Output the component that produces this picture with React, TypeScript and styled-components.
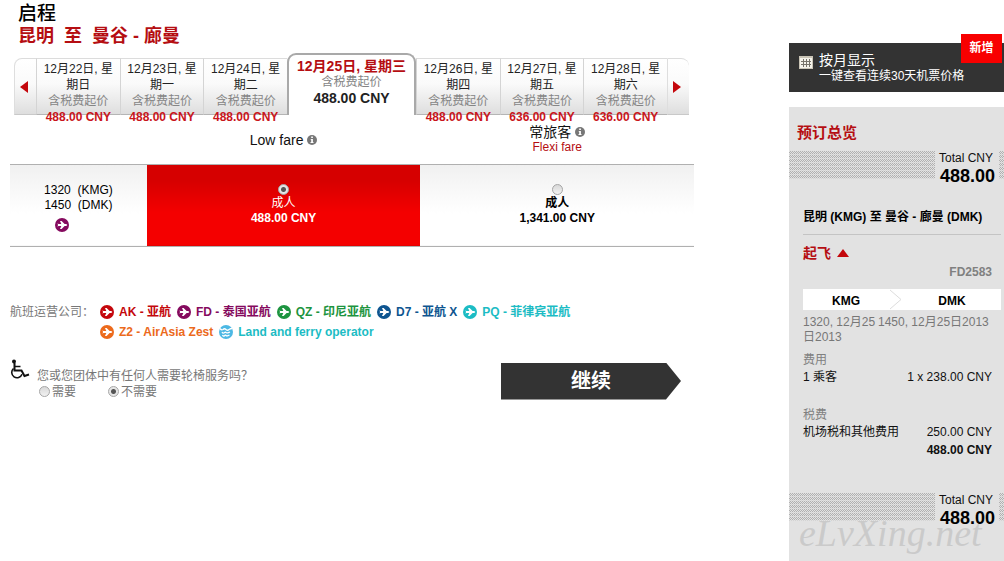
import React from "react";
import styled, { createGlobalStyle, css } from "styled-components";

const RED = "#b50e12";

const GlobalStyle = createGlobalStyle`
  *, *::before, *::after { box-sizing: border-box; }
  body {
    margin: 0;
    background: #fff;
    color: #1a1a1a;
    font: 12px/16px "Liberation Sans", "Noto Sans CJK SC", sans-serif;
  }
  h1, h2, h3, h4, p, ul, dl, dd, dt, fieldset { margin: 0; padding: 0; border: 0; list-style: none; }
  button { font: inherit; color: inherit; border: 0; padding: 0; background: none; cursor: pointer; }
`;

const Page = styled.div`
  display: flex;
  align-items: flex-start;
  min-height: 100vh;
`;

const Main = styled.main`
  flex: 1;
  min-width: 0;
  margin: 3px 95px 0 10px;
`;

const Heading = styled.h1`
  padding-left: 8px;
  font-size: 19px;
  line-height: 22px;
  font-weight: 500;
  color: #000;
`;

const Route = styled.h2`
  padding-left: 8px;
  font-size: 18px;
  line-height: 22px;
  font-weight: 700;
  color: ${RED};
  white-space: pre;
`;

/* date strip */

const Strip = styled.nav`
  display: flex;
  align-items: flex-end;
  height: 62px;
  margin: 6px 5px 0 4px;
`;

const tabFace = css`
  height: 57px;
  border-top: 1px solid #dcdcdc;
  background: linear-gradient(#fff 0%, #fafafa 45%, #dedede 100%);
`;

const Arrow = styled.button<{ $side: "left" | "right" }>`
  ${tabFace}
  flex: 0 0 22px;
  display: flex;
  align-items: center;
  justify-content: center;
  padding-right: 4px;
  border-left: 1px solid #dedede;
  border-bottom: 1px solid #c9c9c9;
  border-radius: ${(p) => (p.$side === "left" ? "8px 0 0 0" : "0 8px 0 0")};
`;

const Tab = styled.button`
  ${tabFace}
  flex: 1 1 83px;
  padding: 2px 4px 0;
  border-left: 1px solid #d4d4d4;
  border-bottom: 1px solid #b5b5b5;
  display: flex;
  flex-direction: column;
  align-items: center;
`;

const ActiveTab = styled.button`
  flex: 0 0 129px;
  height: 62px;
  padding-top: 3px;
  border: 2px solid #a9a9a9;
  border-bottom: 0;
  border-radius: 9px 9px 0 0;
  background: #fff;
  display: flex;
  flex-direction: column;
  align-items: center;
`;

const TabDate = styled.span<{ $active?: boolean }>`
  color: ${(p) => (p.$active ? RED : "#222")};
  font-size: ${(p) => (p.$active ? "14px" : "12px")};
  font-weight: ${(p) => (p.$active ? 700 : 400)};
`;

const TabNote = styled.span`
  color: #858585;
`;

const TabPrice = styled.span<{ $active?: boolean }>`
  color: ${(p) => (p.$active ? "#222" : "#c9151b")};
  font-size: ${(p) => (p.$active ? "14px" : "12px")};
  font-weight: 700;
  white-space: nowrap;
`;

/* fares */

const FareTable = styled.table`
  width: 100%;
  table-layout: fixed;
  border-collapse: collapse;
  text-align: center;

  col:first-child { width: 20%; }
  th { padding: 1px 0 0; height: 49px; font-weight: 400; vertical-align: middle; }
  td {
    height: 82px;
    padding: 0;
    border-top: 1px solid #b0b0b0;
    border-bottom: 1px solid #b0b0b0;
    line-height: 15px;
  }
`;

const FareName = styled.div`
  display: flex;
  justify-content: center;
  align-items: center;
  gap: 4px;
  color: #111;
  font-size: 14px;
`;

const FareSub = styled.div`
  line-height: 15px;
  color: ${RED};
`;

const PlainCell = styled.td`
  background: linear-gradient(#f0f0f0, #fff 60%);
  color: #000;
`;

const PickedCell = styled.td`
  background: linear-gradient(#d60000 20%, #f40000 60%);
  color: #fff;
`;

const Times = styled.div`
  padding-top: 4px;
  white-space: pre;
`;

const TimesIcon = styled.div`
  display: flex;
  justify-content: center;
  padding: 5px 32px 0 0;
`;

const FareChoice = styled.label`
  display: flex;
  flex-direction: column;
  align-items: center;
`;

const Radio = styled.input.attrs({ type: "radio" })`
  appearance: none;
  flex: none;
  width: 11px;
  height: 11px;
  margin: 0;
  border: 1px solid #a6a6a6;
  border-radius: 50%;
  background: linear-gradient(#d8d8d8, #f2f2f2);
  &:checked {
    background: radial-gradient(circle, #555 0 2px, #e6e6e6 3px);
  }
`;

const FareRadio = styled(Radio)`
  margin: 0 0 1px;
`;

const Price = styled.strong`
  font-weight: 700;
`;

/* operators */

const Legend = styled.section`
  display: flex;
  margin-top: 55px;
  line-height: 20px;
  color: #777;
`;

const LegendLabel = styled.h3`
  flex: 0 0 90px;
  font-size: 12px;
  font-weight: 400;
`;

const Operators = styled.ul`
  display: flex;
  flex-wrap: wrap;
  column-gap: 6px;
  max-width: 500px;
`;

const Operator = styled.li<{ $color: string }>`
  display: flex;
  align-items: center;
  gap: 5px;
  font-weight: 700;
  color: ${(p) => p.$color};
`;

/* assistance and submit */

const Bottom = styled.div`
  display: flex;
  align-items: flex-start;
  justify-content: space-between;
  padding-right: 13px;
  margin-top: 17px;
  color: #777;
`;

const Assist = styled.fieldset`
  display: flex;
  gap: 7px;
`;

const Question = styled.p`
  padding-top: 9px;
`;

const Options = styled.div`
  display: flex;
  gap: 32px;
  padding-left: 2px;
`;

const Option = styled.label`
  display: flex;
  align-items: center;
  gap: 2px;
`;

const Continue = styled.button`
  width: 180px;
  height: 37px;
  margin-top: 4px;
  background: #333;
  color: #fff;
  font-size: 20px;
  font-weight: 700;
  clip-path: polygon(0 0, calc(100% - 15px) 0, 100% 50%, calc(100% - 15px) 100%, 0 100%);
`;

/* sidebar */

const Side = styled.aside`
  flex: 0 0 215px;
  align-self: stretch;
  display: flex;
  flex-direction: column;
  padding-top: 43px;
`;

const MonthView = styled.a`
  position: relative;
  display: flex;
  align-items: flex-start;
  gap: 6px;
  height: 49px;
  padding: 9px 10px 0;
  background: #333;
  color: #fff;
  text-decoration: none;
  svg { margin-top: 4px; flex: none; }
`;

const MonthTitle = styled.span`
  display: block;
  font-size: 14px;
`;

const MonthText = styled.span`
  display: block;
  white-space: nowrap;
`;

const Badge = styled.span`
  position: absolute;
  right: 2px;
  top: -9px;
  width: 41px;
  line-height: 29px;
  background: #f80000;
  font-weight: 700;
  text-align: center;
`;

const Summary = styled.section`
  flex: 1;
  margin-top: 15px;
  padding-top: 16px;
  background: #e2e2e2;
  color: #111;
`;

const SummaryTitle = styled.h2`
  padding: 0 0 8px 8px;
  font-size: 15px;
  line-height: 20px;
  color: ${RED};
`;

const TotalBand = styled.div`
  position: relative;
  display: flex;
  justify-content: flex-end;
  height: 28px;
  padding-right: 5px;
  background-color: #e2e2e2;
  background-image:
    repeating-linear-gradient(transparent 0 3px, rgba(226, 226, 226, 0.7) 3px 4px),
    conic-gradient(#b0b0b0 25%, #e2e2e2 0 50%, #b0b0b0 0 75%, #e2e2e2 0);
  background-size: auto, 2px 2px;
`;

const TotalBox = styled.div`
  width: 64px;
  height: 36px;
  padding: 0 4px 0 0;
  background: #e2e2e2;
  display: flex;
  flex-direction: column;
  align-items: flex-end;
  line-height: 15px;
`;

const TotalLabel = styled.span`
  padding-right: 2px;
`;

const TotalAmount = styled.strong`
  font-size: 18px;
  line-height: 20px;
  color: #000;
`;

const Details = styled.div`
  padding: 30px 3px 20px 14px;
`;

const RouteLine = styled.h3`
  padding-bottom: 9px;
  border-bottom: 1px solid #c4c4c4;
  font-size: 12px;
  line-height: 16px;
  color: #000;
  white-space: nowrap;
`;

const Depart = styled.button`
  display: flex;
  align-items: center;
  gap: 6px;
  margin-top: 8px;
  font-size: 14px;
  line-height: 20px;
  font-weight: 700;
  color: ${RED};
`;

const FlightNo = styled.p`
  margin-top: 1px;
  padding-right: 9px;
  text-align: right;
  font-weight: 700;
  color: #808080;
`;

const Leg = styled.div`
  display: grid;
  grid-template-columns: 86px 14px 1fr;
  align-items: center;
  height: 21px;
  margin-top: 9px;
  padding-top: 3px;
  background: #fff;
  font-weight: 700;
  color: #000;
  text-align: center;
  svg { margin-top: -3px; }
`;

const LegTimes = styled.div`
  display: grid;
  grid-template-columns: 75px 1fr;
  line-height: 15px;
  padding-top: 5px;
  color: #777;
`;

const CostHead = styled.h4`
  margin-top: 7px;
  font-size: 12px;
  font-weight: 400;
  color: #808080;
`;

const Costs = styled.dl`
  display: grid;
  grid-template-columns: auto auto;
  justify-content: space-between;
  padding: 0 9px 14px 0;
  line-height: 18px;
`;

const Amount = styled.dd<{ $bold?: boolean }>`
  text-align: right;
  grid-column: 2;
  font-weight: ${(p) => (p.$bold ? 700 : 400)};
`;

const Watermark = styled.span`
  position: absolute;
  left: 10px;
  top: 20px;
  font: italic 38px/40px "Liberation Serif", serif;
  color: rgba(198, 198, 198, 0.85);
`;

const PlaneIcon = ({ color }: { color: string }) => (
  <svg width="14" height="14" viewBox="0 0 14 14" aria-hidden="true">
    <circle cx="7" cy="7" r="7" fill={color} />
    <path d="M2.500 5.300l1 .8H6.300L5 3h1.600l3 3.100h1.400q1.300.4 1.300.9t-1.300.9H9.600l-3 3.100H5l1.300-3.100H3.500l-1 .8.500-1.700z" fill="#fff" />
  </svg>
);

const FerryIcon = ({ color }: { color: string }) => (
  <svg width="14" height="14" viewBox="0 0 14 14" aria-hidden="true">
    <circle cx="7" cy="7" r="7" fill={color} />
    <path
      d="M1 3.500q1.500 2 3 1 1.500-1.500 3 0 1.500 1.500 3 0 1.500-1 3-1M3 7q1 1.800 2.300.8T7 7.500t1.800.3T11 7M3.500 10q1 1.800 2 .8t1.500-.3 1.500.3 2-.8"
      fill="none"
      stroke="#fff"
      strokeWidth="1.300"
    />
  </svg>
);

const InfoIcon = () => (
  <svg width="10" height="10" viewBox="0 0 10 10" aria-hidden="true">
    <circle cx="5" cy="5" r="5" fill="#777" />
    <path d="M4.200 1.500h1.700v1.500H4.200zM3.700 3.900h2.200v3.200h.6v.9h-3v-.9h.7V4.800h-.5z" fill="#fff" />
  </svg>
);

const WheelchairIcon = () => (
  <svg width="20" height="20" viewBox="0 0 20 20" fill="none" stroke="#111" aria-hidden="true">
    <circle cx="4" cy="2.500" r="2" fill="#111" stroke="none" />
    <path d="M4.500 4v7.500h7l3 5.500 4.500-1.500" strokeWidth="2" />
    <path d="M5 7.500h5.500" strokeWidth="1.500" />
    <path d="M3.500 9.500A5.300 5.300 0 1 0 12 15.300" strokeWidth="1.600" />
  </svg>
);

const CalendarIcon = () => (
  <svg width="14" height="13" viewBox="0 0 14 13" aria-hidden="true">
    <rect width="14" height="13" fill="#c9c4b6" />
    <rect x="1" y="2" width="12" height="10" fill="#f4f2ea" />
    <path d="M2 5.500h10M2 8.500h10M4.500 3v8M7.500 3v8M10.500 3v8" stroke="#77736a" strokeWidth="1" />
  </svg>
);

const Triangle = ({ d, w, h }: { d: string; w: number; h: number }) => (
  <svg width={w} height={h} viewBox={`0 0 ${w} ${h}`} aria-hidden="true">
    <path d={d} fill="#c4070c" />
  </svg>
);

const before = [
  ["12月22日, 星期日", "488.00 CNY"],
  ["12月23日, 星期一", "488.00 CNY"],
  ["12月24日, 星期二", "488.00 CNY"],
];
const after = [
  ["12月26日, 星期四", "488.00 CNY"],
  ["12月27日, 星期五", "636.00 CNY"],
  ["12月28日, 星期六", "636.00 CNY"],
];
const operators = [
  ["AK - 亚航", "#c4070c"],
  ["FD - 泰国亚航", "#850a5e"],
  ["QZ - 印尼亚航", "#1d9440"],
  ["D7 - 亚航 X", "#0e5590"],
  ["PQ - 菲律宾亚航", "#1cbcc4"],
  ["Z2 - AirAsia Zest", "#ec6a1c"],
];

const DayTab = ({ date, price }: { date: string; price: string }) => (
  <Tab type="button">
    <TabDate>{date}</TabDate>
    <TabNote>含税费起价</TabNote>
    <TabPrice>{price}</TabPrice>
  </Tab>
);

const Total = ({ children }: { children?: React.ReactNode }) => (
  <TotalBand>
    <TotalBox>
      <TotalLabel>Total CNY</TotalLabel>
      <TotalAmount>488.00</TotalAmount>
    </TotalBox>
    {children}
  </TotalBand>
);

export default function App() {
  return (
    <>
      <GlobalStyle />
      <Page>
        <Main>
          <Heading>启程</Heading>
          <Route>{"昆明  至  曼谷 - 廊曼"}</Route>

          <Strip>
            <Arrow type="button" $side="left" aria-label="前一天">
              <Triangle w={8} h={12} d="M8 0v12L0 6z" />
            </Arrow>
            {before.map(([date, price]) => (
              <DayTab key={date} date={date} price={price} />
            ))}
            <ActiveTab type="button" aria-current="date">
              <TabDate $active>12月25日, 星期三</TabDate>
              <TabNote>含税费起价</TabNote>
              <TabPrice $active>488.00 CNY</TabPrice>
            </ActiveTab>
            {after.map(([date, price]) => (
              <DayTab key={date} date={date} price={price} />
            ))}
            <Arrow type="button" $side="right" aria-label="后一天">
              <Triangle w={8} h={12} d="M0 0v12l8-6z" />
            </Arrow>
          </Strip>

          <FareTable>
            <colgroup>
              <col />
              <col />
              <col />
            </colgroup>
            <thead>
              <tr>
                <th />
                <th scope="col">
                  <FareName>
                    Low fare <InfoIcon />
                  </FareName>
                </th>
                <th scope="col">
                  <FareName>
                    常旅客 <InfoIcon />
                  </FareName>
                  <FareSub>Flexi fare</FareSub>
                </th>
              </tr>
            </thead>
            <tbody>
              <tr>
                <PlainCell>
                  <Times>{"1320  (KMG)\n1450  (DMK)"}</Times>
                  <TimesIcon>
                    <PlaneIcon color="#850a5e" />
                  </TimesIcon>
                </PlainCell>
                <PickedCell>
                  <FareChoice>
                    <FareRadio name="fare" defaultChecked />
                    <span>成人</span>
                    <Price>488.00 CNY</Price>
                  </FareChoice>
                </PickedCell>
                <PlainCell>
                  <FareChoice>
                    <FareRadio name="fare" />
                    <Price>成人</Price>
                    <Price>1,341.00 CNY</Price>
                  </FareChoice>
                </PlainCell>
              </tr>
            </tbody>
          </FareTable>

          <Legend>
            <LegendLabel>航班运营公司：</LegendLabel>
            <Operators>
              {operators.map(([name, color]) => (
                <Operator key={name} $color={color}>
                  <PlaneIcon color={color} />
                  {name}
                </Operator>
              ))}
              <Operator $color="#1cbcc4">
                <FerryIcon color="#4cb8e4" />
                Land and ferry operator
              </Operator>
            </Operators>
          </Legend>

          <Bottom>
            <Assist aria-label="轮椅服务">
              <WheelchairIcon />
              <div>
                <Question>您或您团体中有任何人需要轮椅服务吗？</Question>
                <Options>
                  <Option>
                    <Radio name="wheelchair" />
                    需要
                  </Option>
                  <Option>
                    <Radio name="wheelchair" defaultChecked />
                    不需要
                  </Option>
                </Options>
              </div>
            </Assist>
            <Continue type="submit">继续</Continue>
          </Bottom>
        </Main>

        <Side>
          <MonthView href="#month">
            <CalendarIcon />
            <span>
              <MonthTitle>按月显示</MonthTitle>
              <MonthText>一键查看连续30天机票价格</MonthText>
            </span>
            <Badge>新增</Badge>
          </MonthView>

          <Summary>
            <SummaryTitle>预订总览</SummaryTitle>
            <Total />
            <Details>
              <RouteLine>昆明 (KMG) 至 曼谷 - 廊曼 (DMK)</RouteLine>
              <Depart type="button" aria-expanded="true">
                起飞 <Triangle w={12} h={8} d="M6 0l6 8H0z" />
              </Depart>
              <FlightNo>FD2583</FlightNo>
              <Leg>
                <span>KMG</span>
                <svg width="14" height="21" viewBox="0 0 14 21" fill="none" stroke="#ddd" aria-hidden="true">
                  <path d="M1 1l11 9.500L1 20" />
                </svg>
                <span>DMK</span>
              </Leg>
              <LegTimes>
                <span>1320, 12月25日2013</span>
                <span>1450, 12月25日2013</span>
              </LegTimes>
              <CostHead>费用</CostHead>
              <Costs>
                <dt>1 乘客</dt>
                <Amount>1 x 238.00 CNY</Amount>
              </Costs>
              <CostHead>税费</CostHead>
              <Costs>
                <dt>机场税和其他费用</dt>
                <Amount>250.00 CNY</Amount>
                <Amount $bold>488.00 CNY</Amount>
              </Costs>
            </Details>
            <Total>
              <Watermark>eLvXing.net</Watermark>
            </Total>
          </Summary>
        </Side>
      </Page>
    </>
  );
}
